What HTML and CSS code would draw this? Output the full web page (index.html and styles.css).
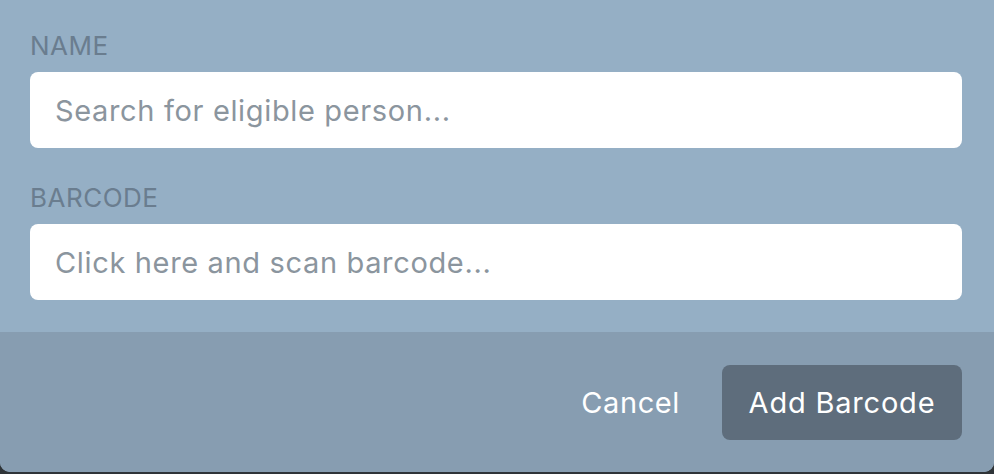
FILE: index.html
```html
<!DOCTYPE html>
<html>
<head>
<meta charset="utf-8">
<link rel="stylesheet" href="styles.css">
</head>
<body>
<div class="modal">
  <div class="modal-body">
    <label class="field-label">Name</label>
    <input class="field-input" type="text" placeholder="Search for eligible person...">
    <label class="field-label second">Barcode</label>
    <input class="field-input" type="text" placeholder="Click here and scan barcode...">
  </div>
  <div class="modal-footer">
    <button class="btn-cancel">Cancel</button>
    <button class="btn-primary">Add Barcode</button>
  </div>
</div>
</body>
</html>
```

FILE: styles.css
```css
html, body {
  margin: 0;
  padding: 0;
  background: #2f3438;
  font-family: Inter, "Liberation Sans", sans-serif;
}

.modal {
  height: 472px;
  background: #95afc5;
  border-radius: 0 0 10px 10px;
  overflow: hidden;
  display: flex;
  flex-direction: column;
}

.modal-body {
  padding: 30px 32px 32px 30px;
  display: flex;
  flex-direction: column;
}

.field-label {
  display: block;
  font-size: 26px;
  line-height: 32px;
  height: 32px;
  color: #6a7d8f;
  text-transform: uppercase;
  letter-spacing: 0.5px;
  margin-bottom: 10px;
}

.field-label.second {
  margin-top: 34px;
}

.field-input {
  box-sizing: border-box;
  height: 76px;
  width: 100%;
  border: none;
  border-radius: 8px;
  background: #ffffff;
  padding: 0 25px;
  font-family: Inter, "Liberation Sans", sans-serif;
  font-size: 29px;
  letter-spacing: 0.65px;
  color: #333;
  outline: none;
}

.field-input::placeholder {
  color: #8b959e;
}

.modal-footer {
  flex: 1;
  background: #879db1;
  display: flex;
  justify-content: flex-end;
  align-items: center;
  padding: 0 32px;
}

.btn-cancel {
  background: none;
  border: none;
  color: #ffffff;
  font-family: Inter, "Liberation Sans", sans-serif;
  font-size: 29px;
  letter-spacing: 0.6px;
  padding: 0;
  margin-right: 42px;
}

.btn-primary {
  width: 240px;
  height: 75px;
  border: none;
  border-radius: 8px;
  background: #5e6d7c;
  color: #ffffff;
  font-family: Inter, "Liberation Sans", sans-serif;
  font-size: 29px;
  letter-spacing: 0.8px;
  padding: 0;
}
```
